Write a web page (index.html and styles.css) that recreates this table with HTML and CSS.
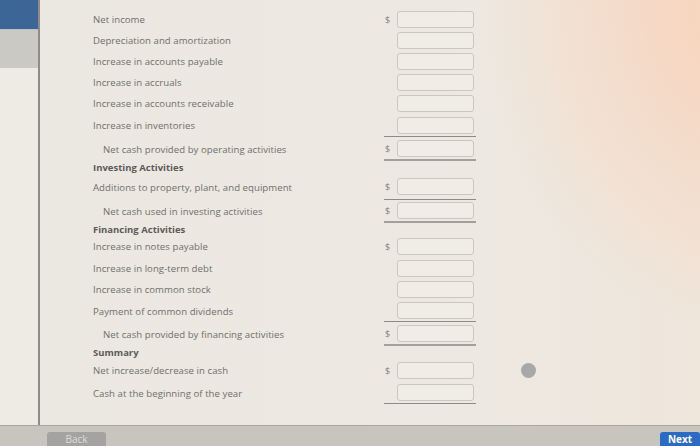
FILE: index.html
```html
<!DOCTYPE html>
<html>
<head>
<meta charset="utf-8">
<link rel="stylesheet" href="styles.css">
</head>
<body>
<div class="screen">
  <div class="top">
    <aside class="side">
      <div class="tab-blue"></div>
      <div class="tab-grey"></div>
      <div class="tab-rest"></div>
    </aside>
    <main class="main">
      <div class="row h21"><span class="lbl">Net income</span><div class="field"><span class="cur">$</span><span class="box"></span></div></div>
      <div class="row h21"><span class="lbl">Depreciation and amortization</span><div class="field"><span class="cur"></span><span class="box"></span></div></div>
      <div class="row h21"><span class="lbl">Increase in accounts payable</span><div class="field"><span class="cur"></span><span class="box"></span></div></div>
      <div class="row h21"><span class="lbl">Increase in accruals</span><div class="field"><span class="cur"></span><span class="box"></span></div></div>
      <div class="row h21"><span class="lbl">Increase in accounts receivable</span><div class="field"><span class="cur"></span><span class="box"></span></div></div>
      <div class="row h23"><span class="lbl">Increase in inventories</span><div class="field thin"><span class="cur"></span><span class="box"></span></div></div>
      <div class="row h24"><span class="lbl sub">Net cash provided by operating activities</span><div class="field thick"><span class="cur">$</span><span class="box"></span></div></div>
      <div class="head h13">Investing Activities</div>
      <div class="row h26"><span class="lbl">Additions to property, plant, and equipment</span><div class="field thin"><span class="cur">$</span><span class="box"></span></div></div>
      <div class="row h23"><span class="lbl sub">Net cash used in investing activities</span><div class="field thick"><span class="cur">$</span><span class="box"></span></div></div>
      <div class="head h12">Financing Activities</div>
      <div class="row h23"><span class="lbl">Increase in notes payable</span><div class="field"><span class="cur">$</span><span class="box"></span></div></div>
      <div class="row h21"><span class="lbl">Increase in long-term debt</span><div class="field"><span class="cur"></span><span class="box"></span></div></div>
      <div class="row h21"><span class="lbl">Increase in common stock</span><div class="field"><span class="cur"></span><span class="box"></span></div></div>
      <div class="row h22"><span class="lbl">Payment of common dividends</span><div class="field thin"><span class="cur"></span><span class="box"></span></div></div>
      <div class="row h24"><span class="lbl sub">Net cash provided by financing activities</span><div class="field thick"><span class="cur">$</span><span class="box"></span></div></div>
      <div class="head h12">Summary</div>
      <div class="row h24"><span class="lbl">Net increase/decrease in cash</span><div class="field"><span class="cur">$</span><span class="box"></span></div><span class="dot"></span></div>
      <div class="row h22"><span class="lbl">Cash at the beginning of the year</span><div class="field thin"><span class="cur"></span><span class="box"></span></div></div>
    </main>
  </div>
  <footer class="bar">
    <span class="btn back">Back</span>
    <span class="btn next">Next</span>
  </footer>
</div>
</body>
</html>
```
FILE: styles.css
```css
* { box-sizing: border-box; }
html, body { margin: 0; padding: 0; }
body {
  width: 700px;
  height: 446px;
  overflow: hidden;
  font-family: "Open Sans", "DejaVu Sans", sans-serif;
  background: #c7c4bd;
}
.screen {
  display: flex;
  flex-direction: column;
  height: 446px;
}
.top {
  display: flex;
  height: 426px;
  border-bottom: 1px solid #a9a69f;
}
.side {
  width: 40px;
  display: flex;
  flex-direction: column;
  border-right: 2px solid #8f8c87;
  background: #e8e5de;
}
.tab-blue { height: 29px; background: #3c6696; }
.tab-grey { height: 39px; background: #cbc9c4; border-top: 1px solid #b9c2cc; }
.tab-rest { flex: 1; background: #eeebe5; }
.main {
  flex: 1;
  padding: 9px 0 0 53px;
  display: flex;
  flex-direction: column;
  background:
    radial-gradient(ellipse 260px 330px at 700px 0px, rgba(250, 208, 182, 0.9), rgba(245, 215, 195, 0) 100%),
    linear-gradient(90deg, #ebe8e1 0%, #ede9e2 60%, #efe6dc 100%);
}
.row {
  display: grid;
  grid-template-columns: 291px 92px;
  align-items: stretch;
  position: relative;
  flex: none;
}
.h21 { height: 21px; }
.h22 { height: 22px; }
.h23 { height: 23px; }
.h24 { height: 24px; }
.h26 { height: 26px; }
.h12 { height: 12px; }
.h13 { height: 13px; }
.lbl {
  font-size: 9.6px;
  color: #716e6b;
  display: flex;
  align-items: center;
  white-space: nowrap;
  letter-spacing: 0.05px;
}
.lbl.sub { padding-left: 10px; }
.head {
  flex: none;
  font-size: 9.5px;
  font-weight: 700;
  color: #5c5a58;
  display: flex;
  align-items: center;
  white-space: nowrap;
}
.field {
  display: flex;
  align-items: center;
}
.field.thin { border-bottom: 1px solid #8e8b87; }
.field.thick { border-bottom: 2px solid #a3a09b; }
.cur {
  width: 13px;
  flex: none;
  font-size: 9px;
  color: #858280;
  padding-left: 1px;
}
.box {
  flex: none;
  width: 77px;
  height: 17px;
  border: 1px solid #cac7c1;
  border-radius: 3px;
  background: #f0ede7;
}
.dot {
  position: absolute;
  left: 428px;
  top: 5px;
  width: 15px;
  height: 15px;
  border-radius: 50%;
  background: #a8a8a8;
}
.bar {
  flex: 1;
  display: flex;
  justify-content: space-between;
  align-items: flex-end;
  padding: 0 0 0 47px;
  background: #c8c5be;
}
.btn {
  height: 14px;
  font-size: 10px;
  display: flex;
  align-items: center;
  justify-content: center;
  border-radius: 3px 3px 0 0;
  line-height: 12px;
}
.back {
  width: 59px;
  background: #a4a3a1;
  color: #dedddb;
}
.next {
  width: 40px;
  background: #2c6bc3;
  color: #ffffff;
  font-weight: 700;
}
```
